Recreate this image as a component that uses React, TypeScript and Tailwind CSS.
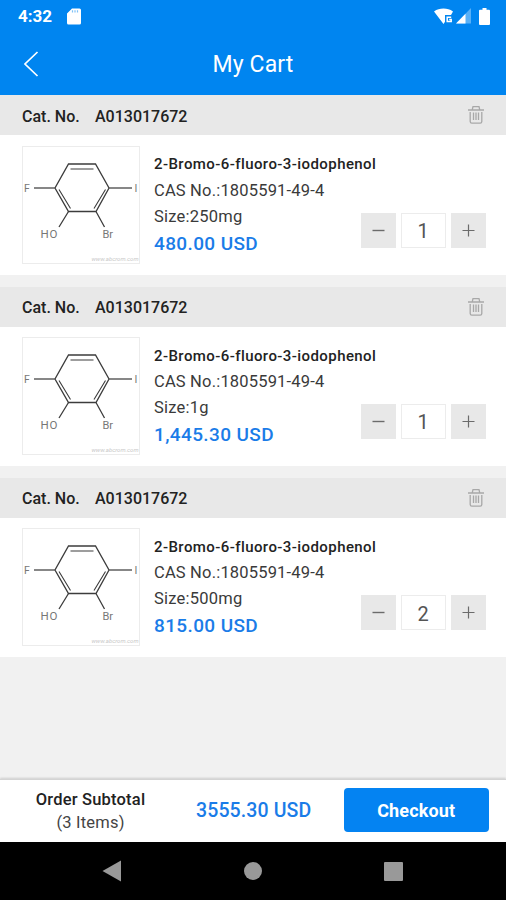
import { useState } from "react";

type CartItem = {
  id: number;
  catNo: string;
  name: string;
  cas: string;
  size: string;
  price: string;
  qty: number;
};

const ITEMS: CartItem[] = [
  { id: 1, catNo: "A013017672", name: "2-Bromo-6-fluoro-3-iodophenol", cas: "1805591-49-4", size: "250mg", price: "480.00 USD", qty: 1 },
  { id: 2, catNo: "A013017672", name: "2-Bromo-6-fluoro-3-iodophenol", cas: "1805591-49-4", size: "1g", price: "1,445.30 USD", qty: 1 },
  { id: 3, catNo: "A013017672", name: "2-Bromo-6-fluoro-3-iodophenol", cas: "1805591-49-4", size: "500mg", price: "815.00 USD", qty: 2 },
];

function StatusBar() {
  return (
    <div className="flex h-8 items-center pl-[18px] pr-4 text-white">
      <span className="text-[17px] font-bold leading-8">4:32</span>
      <svg className="ml-[15px]" width="14" height="17" viewBox="0 0 14 17">
        <path d="M5 .5h7.5A1.5 1.5 0 0 1 14 2v13a1.5 1.5 0 0 1-1.5 1.5h-11A1.5 1.5 0 0 1 0 15V5.5z" fill="currentColor" />
        <path d="M5.5 2.3v2.2M8 2.3v2.2M10.5 2.3v2.2" stroke="#0085f0" strokeOpacity=".5" strokeWidth="1.2" />
      </svg>
      <div className="ml-auto flex items-center">
        <svg width="20" height="17" viewBox="0 0 20 17">
          <path d="M0 3.5C3 1.2 6 .5 9.5.5s6.5.7 9.5 3l-2 3.5h-6v6.8L9.5 16z" fill="currentColor" />
          <path d="M17.2 9.3h-4v4.2h4v-2h-2" fill="none" stroke="currentColor" strokeWidth="1.5" />
        </svg>
        <svg className="ml-[2px]" width="15" height="16" viewBox="0 0 15 16">
          <path d="M15 0v15.5H0z" fill="#58b0f7" />
          <path d="M9.5 5.7v9.8H0z" fill="currentColor" />
        </svg>
        <svg className="ml-[8px]" width="11" height="17" viewBox="0 0 11 17">
          <path d="M3.5 0h4v1.8H10a1 1 0 0 1 1 1V16a1 1 0 0 1-1 1H1a1 1 0 0 1-1-1V2.8a1 1 0 0 1 1-1h2.5z" fill="currentColor" />
        </svg>
      </div>
    </div>
  );
}

function TitleBar() {
  return (
    <div className="grid h-16 grid-cols-[60px_1fr_60px] items-center text-white">
      <button className="pl-6" aria-label="Back">
        <svg width="15" height="26" viewBox="0 0 15 26" fill="none" stroke="currentColor" strokeWidth="1.7">
          <path d="M13.5 1 1 13l12.5 12" />
        </svg>
      </button>
      <h1 className="text-center text-[23px] leading-none tracking-[0.15px]">My Cart</h1>
    </div>
  );
}

function TrashIcon() {
  return (
    <svg width="18" height="20" viewBox="0 0 18 20" fill="none" stroke="#a8a8a8" strokeWidth="1.3">
      <path d="M1 5h16M5.2 5 6 1.7h6l.8 3.3M3.2 7v9.5a1.6 1.6 0 0 0 1.6 1.6h8.4a1.6 1.6 0 0 0 1.6-1.6V7M6.5 7.5V15M9 7.5V15M11.5 7.5V15" />
    </svg>
  );
}

function Molecule() {
  return (
    <svg className="block" width="116" height="116" viewBox="1 1 116 116" fontFamily="Roboto, sans-serif">
      <g fill="none" stroke="#3c3c3c" strokeWidth="1.3">
        <path d="M46.5 18h27L87 42 74 65.5H46.5L33 42z" />
        <path d="M48.5 23h23M83.5 43.5 72 62.5M37 43.5l11.5 19" strokeWidth="1.1" />
        <path d="M46.5 65.5 37 81M74 65.5 82.5 81" />
        <path d="M12 42h21M87 42h23" stroke="#606060" />
      </g>
      <g fill="#777" fontSize="11.5">
        <text x="2" y="46" fontSize="10.5">F</text>
        <text x="112.5" y="46" fontSize="10.5">I</text>
        <text x="18.5" y="92" letterSpacing="0.8">HO</text>
        <text x="80.5" y="92" fontSize="11">Br</text>
      </g>
      <text x="69.5" y="115" fill="#c8c8c8" fontSize="6" fontStyle="italic" textLength="47">www.abcrom.com</text>
    </svg>
  );
}

function Stepper({ value, onChange }: { value: number; onChange: (v: number) => void }) {
  return (
    <div className="flex items-center gap-[5px] text-[#6b6b6b]">
      <button className="grid size-[35px] place-items-center bg-[#e8e8e8]" aria-label="Decrease" onClick={() => onChange(Math.max(1, value - 1))}>
        <svg width="13" height="13" viewBox="0 0 13 13" stroke="currentColor" strokeWidth="1.4">
          <path d="M.5 6.5h12" />
        </svg>
      </button>
      <span className="grid h-[35px] w-[45px] place-items-center border border-[#ececec] bg-white pt-0.5 text-[20px] leading-none text-[#555]">{value}</span>
      <button className="grid size-[35px] place-items-center bg-[#e8e8e8]" aria-label="Increase" onClick={() => onChange(value + 1)}>
        <svg width="13" height="13" viewBox="0 0 13 13" stroke="currentColor" strokeWidth="1.2">
          <path d="M.5 6.5h12M6.5.5v12" />
        </svg>
      </button>
    </div>
  );
}

function CartCard({ item }: { item: CartItem }) {
  const [qty, setQty] = useState(item.qty);

  return (
    <section>
      <div className="flex h-10 items-center bg-[#e8e8e8] pl-[22px] pr-[21px] text-[16px] font-medium text-[#222]">
        <span className="w-[73px] pt-[3px]">Cat. No.</span>
        <span className="pt-[3px]">{item.catNo}</span>
        <button className="ml-auto" aria-label="Remove">
          <TrashIcon />
        </button>
      </div>
      <div className="flex h-[139.3px] items-start bg-white pl-[22px] pr-5 pt-[10.5px]">
        <div className="size-[118px] shrink-0 border border-[#ececec]">
          <Molecule />
        </div>
        <div className="ml-[14px] flex-1 whitespace-nowrap text-[#3a3a3a]">
          <h2 className="mt-[5.5px] h-[25.5px] text-[15px] font-medium leading-[26px] tracking-[0.42px] text-[#222]">{item.name}</h2>
          <p className="h-[27px] text-[16.5px] leading-[27px] tracking-[0.18px]">CAS No.:{item.cas}</p>
          <div className="flex">
            <div>
              <p className="h-[26px] text-[16.5px] leading-[26px] tracking-[0.22px]">Size:{item.size}</p>
              <p className="h-[28px] text-[19px] font-medium leading-[28px] tracking-[0.38px] text-[#1a7ce8]">{item.price}</p>
            </div>
            <div className="ml-auto mr-[0.5px] mt-[8.7px]">
              <Stepper value={qty} onChange={setQty} />
            </div>
          </div>
        </div>
      </div>
    </section>
  );
}

function CheckoutBar() {
  return (
    <footer className="flex h-[63px] items-center border-t border-[#d4d4d4] bg-white pb-0.5 pr-[17px] shadow-[0_-1px_2px_rgba(0,0,0,0.15)]">
      <div className="w-[181px] pt-px text-center text-[16.5px] leading-[23px] tracking-[0.2px]">
        <div className="font-medium text-[#222]">Order Subtotal</div>
        <div className="text-[#444]">(3 Items)</div>
      </div>
      <div className="ml-[15px] pt-[2px] text-[19.5px] font-medium tracking-[0.12px] text-[#1a7ce8]">3555.30 USD</div>
      <button className="ml-auto h-11 w-[145.5px] rounded-[4px] bg-[#0483f2] pt-px text-[18px] font-bold tracking-[0.15px] text-white">Checkout</button>
    </footer>
  );
}

function AndroidNav() {
  return (
    <nav className="flex h-[58px] items-center justify-between bg-black pl-[102px] pr-[103px]">
      <svg width="20" height="22" viewBox="0 0 20 22" fill="#999">
        <path d="M19 .5v21L.5 11z" />
      </svg>
      <span className="size-[18px] rounded-full bg-[#999]" />
      <span className="size-[19px] rounded-[1px] bg-[#999]" />
    </nav>
  );
}

export default function App() {
  return (
    <div className="flex h-[900px] w-[506px] flex-col overflow-hidden bg-[#f1f1f1] font-[Roboto,sans-serif]">
      <header className="h-[95.4px] shrink-0 bg-[#0085f0]">
        <StatusBar />
        <TitleBar />
      </header>
      <main className="flex flex-1 flex-col gap-3">
        {ITEMS.map((item) => (
          <CartCard key={item.id} item={item} />
        ))}
      </main>
      <CheckoutBar />
      <AndroidNav />
    </div>
  );
}
